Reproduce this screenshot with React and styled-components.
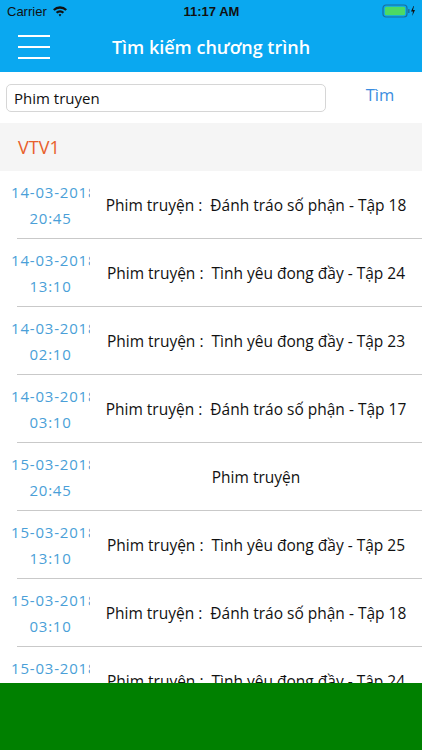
import React from "react";
import styled, {createGlobalStyle} from "styled-components";

const GlobalStyle = createGlobalStyle`
	body {
		margin: 0;
		background: #ffffff;
		font-family: "Liberation Sans", Arial, sans-serif;
		overflow: hidden;
	}
`;

const Screen = styled.div`
	width: 422px;
	height: 750px;
	position: relative;
	overflow: hidden;
	background: #ffffff;
`;

const TopBar = styled.div`
	background: #0aa8f0;
	height: 72px;
	display: flex;
	flex-direction: column;
`;

const StatusBar = styled.div`
	height: 22px;
	display: grid;
	grid-template-columns: 1fr auto 1fr;
	align-items: center;
	padding: 0 6px 0 7px;
	font-size: 13px;
	color: #111;
`;

const Carrier = styled.div`
	display: flex;
	align-items: center;
	gap: 5px;
`;

const Clock = styled.div`
	font-weight: bold;
`;

const Power = styled.div`
	display: flex;
	justify-content: flex-end;
	align-items: center;
	gap: 3px;
`;

const NavBar = styled.div`
	flex: 1;
	display: flex;
	align-items: center;
	padding-left: 18px;
`;

const Burger = styled.div`
	width: 32px;
	display: flex;
	flex-direction: column;
	gap: 9px;
	span {
		display: block;
		height: 2px;
		background: #ffffff;
	}
`;

const Title = styled.div`
	flex: 1;
	text-align: center;
	color: #ffffff;
	font-family: "Open Sans", sans-serif;
	font-size: 18px;
	font-weight: 600;
	margin-right: 50px;
`;

const SearchRow = styled.div`
	height: 51px;
	display: flex;
	align-items: center;
	padding: 0 6px;
`;

const SearchInput = styled.div`
	width: 311px;
	height: 26px;
	border: 1px solid #d6d6d6;
	border-radius: 5px;
	display: flex;
	align-items: center;
	padding-left: 7px;
	font-family: "Open Sans", sans-serif;
	font-size: 15px;
	color: #111;
`;

const SearchButton = styled.div`
	flex: 1;
	text-align: center;
	padding-left: 18px;
	color: #3b8de0;
	font-family: "Open Sans", sans-serif;
	font-size: 16.5px;
	margin-top: -6px;
`;

const SectionHeader = styled.div`
	height: 48px;
	background: #f5f5f5;
	display: flex;
	align-items: center;
	padding-left: 18px;
	color: #e8602c;
	font-family: "Open Sans", sans-serif;
	font-size: 18px;
`;

const Row = styled.div`
	height: 67px;
	display: flex;
	align-items: center;
	position: relative;
	margin-bottom: 1px;
	&::after {
		content: "";
		position: absolute;
		left: 17px;
		right: 0;
		bottom: -1px;
		height: 1px;
		background: #c9c9c9;
	}
`;

const DateCol = styled.div`
	margin-left: 11px;
	width: 79px;
	overflow: hidden;
	white-space: nowrap;
	text-align: center;
	color: #4a9fd8;
	font-family: "Open Sans", sans-serif;
	font-size: 15px;
	letter-spacing: 0.8px;
	line-height: 26px;
`;

const Program = styled.div`
	flex: 1;
	text-align: center;
	white-space: pre;
	font-family: "Open Sans", sans-serif;
	font-size: 15.5px;
	color: #111;
`;

const BottomBar = styled.div`
	position: absolute;
	left: 0;
	right: 0;
	bottom: 0;
	height: 67px;
	background: #008000;
`;

const programs = [
	{date: "14-03-2018", time: "20:45", name: "Phim truyện :  Đánh tráo số phận - Tập 18"},
	{date: "14-03-2018", time: "13:10", name: "Phim truyện :  Tình yêu đong đầy - Tập 24"},
	{date: "14-03-2018", time: "02:10", name: "Phim truyện :  Tình yêu đong đầy - Tập 23"},
	{date: "14-03-2018", time: "03:10", name: "Phim truyện :  Đánh tráo số phận - Tập 17"},
	{date: "15-03-2018", time: "20:45", name: "Phim truyện"},
	{date: "15-03-2018", time: "13:10", name: "Phim truyện :  Tình yêu đong đầy - Tập 25"},
	{date: "15-03-2018", time: "03:10", name: "Phim truyện :  Đánh tráo số phận - Tập 18"},
	{date: "15-03-2018", time: "02:10", name: "Phim truyện :  Tình yêu đong đầy - Tập 24"},
];

function Wifi() {
	return (
		<svg width="16" height="12" viewBox="0 0 16 12">
			<path d="M1 4.2 A10 10 0 0 1 15 4.2 L13.4 5.8 A7.8 7.8 0 0 0 2.6 5.8 Z" fill="#111" />
			<path d="M3.8 7 A6 6 0 0 1 12.2 7 L10.6 8.6 A3.8 3.8 0 0 0 5.4 8.6 Z" fill="#111" />
			<path d="M6.6 9.8 A2 2 0 0 1 9.4 9.8 L8 11.4 Z" fill="#111" />
		</svg>
	);
}

function Battery() {
	return (
		<svg width="34" height="14" viewBox="0 0 34 14">
			<rect x="1" y="1" width="24" height="12" rx="3" fill="none" stroke="#1a6f9c" strokeWidth="1.2" />
			<rect x="2.8" y="2.8" width="20.4" height="8.4" rx="1.5" fill="#4cd964" />
			<rect x="26" y="5" width="1.6" height="4" rx="0.6" fill="#1a6f9c" />
			<path d="M31.5 2 L29 7.6 L31 7.6 L30.2 12 L33 6 L31 6 L32 2 Z" fill="#111" />
		</svg>
	);
}

export default function App() {
	return (
		<>
			<GlobalStyle />
			<Screen>
				<TopBar>
					<StatusBar>
						<Carrier>
							Carrier <Wifi />
						</Carrier>
						<Clock>11:17 AM</Clock>
						<Power>
							<Battery />
						</Power>
					</StatusBar>
					<NavBar>
						<Burger>
							<span />
							<span />
							<span />
						</Burger>
						<Title>Tìm kiếm chương trình</Title>
					</NavBar>
				</TopBar>
				<SearchRow>
					<SearchInput>Phim truyen</SearchInput>
					<SearchButton>Tìm</SearchButton>
				</SearchRow>
				<SectionHeader>VTV1</SectionHeader>
				{programs.map((p, i) => (
					<Row key={i}>
						<DateCol>
							{p.date}
							<br />
							{p.time}
						</DateCol>
						<Program>{p.name}</Program>
					</Row>
				))}
				<BottomBar />
			</Screen>
		</>
	);
}
